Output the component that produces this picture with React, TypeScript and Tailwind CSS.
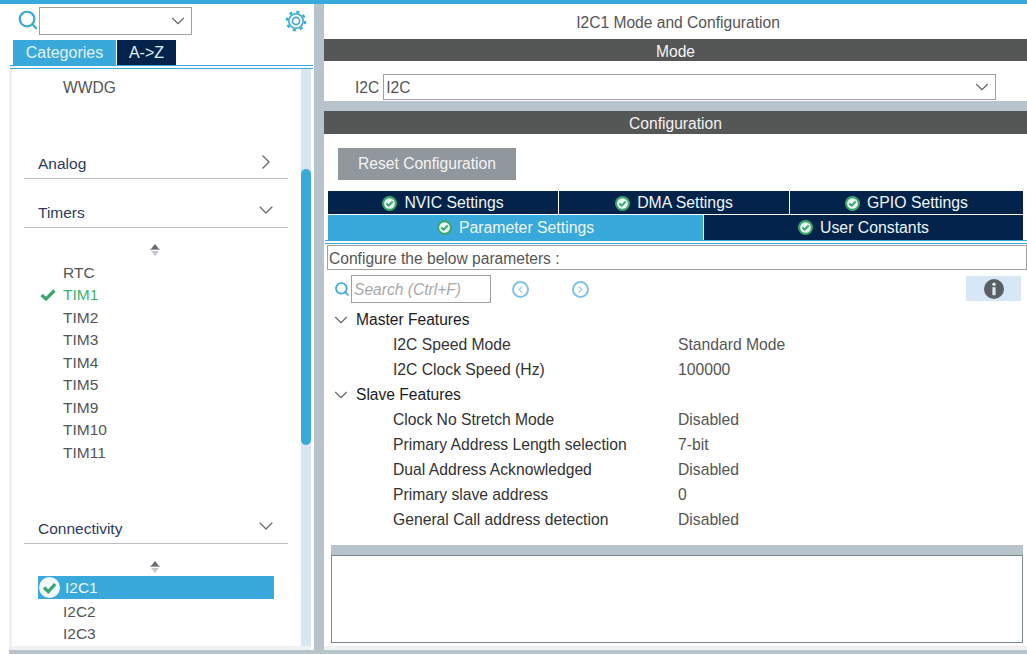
import { ChevronDown, ChevronRight, ChevronLeft, Search } from "lucide-react";

function CheckBadge({ size = 15 }: { size?: number }) {
  return (
    <svg width={size} height={size} viewBox="0 0 14 14" className="shrink-0">
      <circle cx="7" cy="7" r="7" fill="#3aa76d" />
      <circle cx="7" cy="7" r="5" fill="#e8f7ef" />
      <path d="M4 7 6.2 9 10 5.2" fill="none" stroke="#3aa76d" strokeWidth="1.9" />
    </svg>
  );
}

function SelectedBadge() {
  return (
    <svg width="21" height="21" viewBox="0 0 21 21" className="shrink-0">
      <circle cx="10.5" cy="10.5" r="10.5" fill="#f2fafd" />
      <path d="M5 10.5 9.3 14.6 16.2 7" fill="none" stroke="#3aa76d" strokeWidth="3.2" />
    </svg>
  );
}

function GearIcon() {
  return (
    <svg width="22" height="22" viewBox="0 0 22 22" className="ml-auto mr-[-1px] mt-[3px] text-[#39a9dc]" fill="none" stroke="currentColor">
      <circle cx="11" cy="11" r="9.2" strokeWidth="2.2" strokeDasharray="3.2 4.03" />
      <circle cx="11" cy="11" r="7.2" strokeWidth="1.6" />
      <circle cx="11" cy="11" r="3.6" strokeWidth="1.6" />
    </svg>
  );
}

function InfoIcon() {
  return (
    <svg width="20" height="20" viewBox="0 0 20 20">
      <circle cx="10" cy="10" r="10" fill="#5a5f63" />
      <circle cx="10" cy="5.2" r="1.7" fill="#d8e7f5" />
      <rect x="8.4" y="8.2" width="3.2" height="8" fill="#d8e7f5" />
    </svg>
  );
}

function SortArrows() {
  return (
    <div className="flex justify-center pr-[2px]">
      <svg width="12" height="14" viewBox="0 0 12 14">
        <path d="M6 1 10 6H2z" fill="#666b70" />
        <rect x="1" y="6" width="10" height="1" fill="#9aa0a5" />
        <path d="M6 13 10 8H2z" fill="#c4c8cc" />
      </svg>
    </div>
  );
}

function CategoryHead({ label, open }: { label: string; open?: boolean }) {
  return (
    <div className="flex h-[25px] items-center justify-between border-b border-[#b9bfc4] pb-[4px] pl-[14px] pr-[10px] text-[15.5px] text-[#2e3a5c]">
      <span>{label}</span>
      {open ? (
        <ChevronDown size={24} strokeWidth={1.2} className="-mb-[2px] -mt-[8px] text-[#666]" />
      ) : (
        <ChevronRight size={24} strokeWidth={1.3} className="-mb-[3px] -mt-[7px] text-[#666]" />
      )}
    </div>
  );
}

function TreeItem({ label }: { label: string }) {
  return <div className="h-[22.5px] pl-[39px] text-[15.5px] leading-[22.5px] text-[#555]">{label}</div>;
}

function Tab({ label, active, className }: { label: string; active?: boolean; className: string }) {
  return (
    <div
      className={
        (active ? "bg-[#39a9dc] " : "bg-[#03234b] ") +
        "flex items-center justify-center gap-[7px] text-[15.8px] text-[#eef6fa] " +
        className
      }
    >
      <CheckBadge />
      <span>{label}</span>
    </div>
  );
}

function Param({ name, value }: { name: string; value: string }) {
  return (
    <div className="flex h-[25px] items-center pl-[69px] text-[15.7px] text-[#333]">
      <span className="w-[285px]">{name}</span>
      <span className="text-[#555]">{value}</span>
    </div>
  );
}

function Group({ label }: { label: string }) {
  return (
    <div className="flex h-[25px] items-center pl-[6px] text-[#1c1c1c]">
      <ChevronDown size={22} strokeWidth={1.2} className="mr-[4px] text-[#666]" />
      <span>{label}</span>
    </div>
  );
}

export default function App() {
  return (
    <div className="flex h-[654px] w-[1027px] flex-col overflow-hidden bg-white font-['Liberation_Sans',sans-serif] text-[15.6px] leading-[24px]">
      <div className="h-[4px] shrink-0 bg-[#39a9dc]" />
      <div className="flex min-h-0 flex-1">
        {/* left panel */}
        <div className="flex w-[314px] shrink-0 flex-col bg-white">
          <div className="flex h-[36px] shrink-0 items-start pl-[17px] pr-[8px] pt-[3px]">
            <Search size={22} strokeWidth={2.4} className="mt-[2px] text-[#39a9dc]" />
            <div className="flex h-[28px] w-[153px] items-center justify-end border border-[#a0a0a0] pr-[2px]">
              <ChevronDown size={22} strokeWidth={1.2} className="text-[#666]" />
            </div>
            <GearIcon />
          </div>
          <div className="flex h-[25px] shrink-0 pl-[13px] text-[16px]">
            <div className="flex w-[103px] items-center justify-center bg-[#39a9dc] text-[#e0f2fa]">Categories</div>
            <div className="ml-px flex w-[59px] items-center justify-center bg-[#03234b] text-[#e0f2fa]">A-&gt;Z</div>
          </div>
          <div className="ml-[10px] h-[4px] w-[303px] shrink-0 border-y border-[#39a9dc]" />
          <div className="ml-[9px] mr-[3px] flex min-h-0 flex-1 border-l-[3px] border-[#f0f0f0]">
            <div className="min-w-0 flex-1 pl-[12px] pr-[13px]">
              <div className="pl-[39px] pt-[7px] text-[#555]">WWDG</div>
              <div className="mt-[54px]">
                <CategoryHead label="Analog" />
              </div>
              <div className="mt-[24px]">
                <CategoryHead label="Timers" open />
              </div>
              <div className="mt-[15px]">
                <SortArrows />
              </div>
              <div className="mt-[4.7px]">
                <TreeItem label="RTC" />
                <div className="relative h-[22.5px] pl-[39px] text-[15.5px] leading-[22.5px] text-[#3cb371]">
                  <svg width="16" height="12" viewBox="0 0 16 12" className="absolute left-[16px] top-[5px]">
                    <path d="M1.5 6 6 10 14.5 1.5" fill="none" stroke="#3aa76d" strokeWidth="3.2" />
                  </svg>
                  TIM1
                </div>
                {["TIM2", "TIM3", "TIM4", "TIM5", "TIM9", "TIM10", "TIM11"].map((t) => (
                  <TreeItem key={t} label={t} />
                ))}
              </div>
              <div className="mt-[55.3px]">
                <CategoryHead label="Connectivity" open />
              </div>
              <div className="mt-[16px]">
                <SortArrows />
              </div>
              <div className="ml-[14px] mt-[2px] flex h-[23px] w-[236px] items-center bg-[#39a9dc] text-[15.5px] text-[#eef6fa]">
                <span className="ml-px mr-[5px] flex">
                  <SelectedBadge />
                </span>
                I2C1
              </div>
              <div className="mt-[1.5px]">
                <TreeItem label="I2C2" />
                <TreeItem label="I2C3" />
              </div>
            </div>
            <div className="w-[10px] shrink-0 bg-[#d6e6f3] pt-[100px]">
              <div className="h-[276px] rounded-full bg-[#39a9dc]" />
            </div>
          </div>
          <div className="ml-[9px] mr-[3px] h-[4px] shrink-0 bg-[#f0f0f0]" />
          <div className="ml-[9px] h-[4px] shrink-0 bg-[#b8c4cc]" />
        </div>
        {/* splitter */}
        <div className="w-[10px] shrink-0 bg-[#b8c4cc]" />
        {/* right panel */}
        <div className="flex min-w-0 flex-1 flex-col">
          <div className="flex h-[35px] shrink-0 items-center justify-center pl-[5px] pt-[2px] text-[#555]">I2C1 Mode and Configuration</div>
          <div className="flex h-[22px] shrink-0 items-center justify-center bg-[#555656] pt-[3px] text-[#f4f4f4]">Mode</div>
          <div className="flex h-[40px] shrink-0 items-end pb-px pl-[31px] pr-[31px] text-[#555]">
            <span>I2C</span>
            <div className="ml-[4px] flex h-[26px] flex-1 items-center justify-between border border-[#a0a0a0] pl-[2px] pr-[2px]">
              <span className="pt-[2px]">I2C</span>
              <ChevronDown size={22} strokeWidth={1.2} className="text-[#666]" />
            </div>
          </div>
          <div className="h-[10px] shrink-0 bg-[#b8c4cc]" />
          <div className="flex h-[23px] shrink-0 items-center justify-center bg-[#555656] pt-[2px] text-[#f4f4f4]">Configuration</div>
          <div className="px-[14px] pt-[14px]">
            <div className="flex h-[32px] w-[178px] items-center justify-center bg-[#90989e] text-[#f4f4f4]">Reset Configuration</div>
          </div>
          <div className="mt-[11px] w-[699px] pl-[4px]">
            <div className="flex h-[23px] gap-px">
              <Tab label="NVIC Settings" className="w-[230px] pt-px" />
              <Tab label="DMA Settings" className="w-[230px] pt-px" />
              <Tab label="GPIO Settings" className="w-[233px] pt-px" />
            </div>
            <div className="mt-px flex h-[25px] gap-px">
              <Tab label="Parameter Settings" active className="w-[375px]" />
              <Tab label="User Constants" className="w-[319px]" />
            </div>
          </div>
          <div className="ml-px h-[4px] shrink-0 border-y border-[#39a9dc]" />
          <div className="ml-[3px] mt-px flex h-[25px] shrink-0 items-center border border-[#a0a0a0] pl-px pt-[3px] text-[#555]">Configure the below parameters :</div>
          <div className="flex h-[37px] shrink-0 items-center pl-[10px] pr-[6px]">
            <Search size={16} strokeWidth={2.6} className="text-[#39a9dc]" />
            <div className="ml-px flex h-[28px] w-[140px] items-center border border-[#a0a0a0] pl-[2px] pt-[2px] italic text-[#a8a8a8]">Search (Ctrl+F)</div>
            <div className="ml-[21px] mt-px flex h-[17px] w-[17px] items-center justify-center rounded-full border-2 border-[#7fc4e8]">
              <ChevronLeft size={11} strokeWidth={2} className="text-[#39a9dc]" />
            </div>
            <div className="ml-[43px] mt-px flex h-[17px] w-[17px] items-center justify-center rounded-full border-2 border-[#7fc4e8]">
              <ChevronRight size={11} strokeWidth={2} className="text-[#39a9dc]" />
            </div>
            <div className="ml-auto flex h-[25px] w-[55px] items-center justify-center bg-[#d8e7f5]">
              <InfoIcon />
            </div>
          </div>
          <div>
            <Group label="Master Features" />
            <Param name="I2C Speed Mode" value="Standard Mode" />
            <Param name="I2C Clock Speed (Hz)" value="100000" />
            <Group label="Slave Features" />
            <Param name="Clock No Stretch Mode" value="Disabled" />
            <Param name="Primary Address Length selection" value="7-bit" />
            <Param name="Dual Address Acknowledged" value="Disabled" />
            <Param name="Primary slave address" value="0" />
            <Param name="General Call address detection" value="Disabled" />
          </div>
          <div className="ml-[7px] mr-[4px] mt-[13px] flex flex-1 flex-col">
            <div className="h-[10px] bg-[#b8c4cc]" />
            <div className="flex-1 border border-[#7d8790] bg-white" />
          </div>
          <div className="mt-[3px] h-[4px] shrink-0 bg-[#f0f0f0]" />
          <div className="h-[4px] shrink-0 bg-[#b8c4cc]" />
        </div>
      </div>
    </div>
  );
}
